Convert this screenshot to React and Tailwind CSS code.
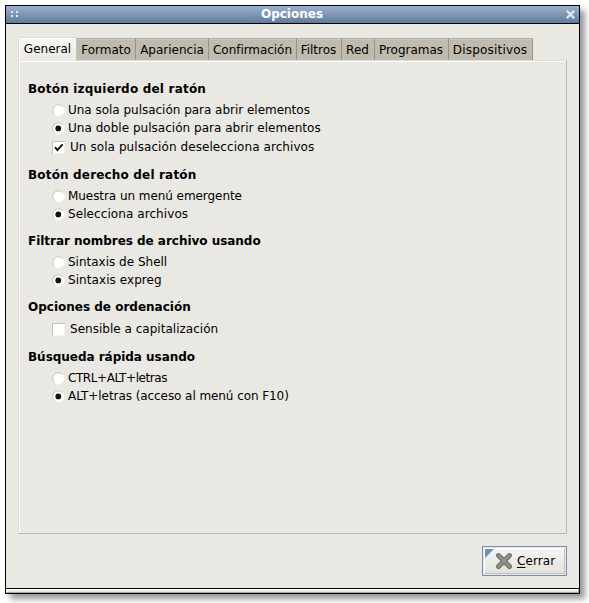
import React from "react";

const tabs = [
  { label: "Formato", width: "w-[59px]" },
  { label: "Apariencia", width: "w-[73px]" },
  { label: "Confirmación", width: "w-[88px] tracking-[-0.05px]" },
  { label: "Filtros", width: "w-[45px] pr-px" },
  { label: "Red", width: "w-[33px] pr-px" },
  { label: "Programas", width: "w-[74px] pr-px" },
  { label: "Dispositivos", width: "w-[84px] pr-px tracking-[0.18px]" },
];

const groups = [
  {
    title: "Botón izquierdo del ratón",
    spacing: "tracking-[0.2px]",
    options: [
      { type: "radio", spacing: "tracking-[-0.02px]", label: "Una sola pulsación para abrir elementos" },
      { type: "radio", on: true, spacing: "tracking-[0.025px]", label: "Una doble pulsación para abrir elementos" },
      { type: "check", on: true, spacing: "tracking-[0.075px]", label: "Un sola pulsación deselecciona archivos" },
    ],
  },
  {
    title: "Botón derecho del ratón",
    spacing: "tracking-[0.17px]",
    options: [
      { type: "radio", spacing: "tracking-[-0.06px]", label: "Muestra un menú emergente" },
      { type: "radio", on: true, spacing: "tracking-[0.08px]", label: "Selecciona archivos" },
    ],
  },
  {
    title: "Filtrar nombres de archivo usando",
    spacing: "tracking-[-0.03px]",
    options: [
      { type: "radio", spacing: "tracking-normal", label: "Sintaxis de Shell" },
      { type: "radio", on: true, spacing: "tracking-[0.07px]", label: "Sintaxis expreg" },
    ],
  },
  {
    title: "Opciones de ordenación",
    spacing: "tracking-normal",
    options: [{ type: "check", spacing: "tracking-[0.02px]", label: "Sensible a capitalización" }],
  },
  {
    title: "Búsqueda rápida usando",
    spacing: "tracking-[-0.03px]",
    options: [
      { type: "radio", spacing: "tracking-[-0.42px]", label: "CTRL+ALT+letras" },
      { type: "radio", on: true, spacing: "tracking-[-0.07px]", label: "ALT+letras (acceso al menú con F10)" },
    ],
  },
];

function Radio({ on }) {
  return (
    <svg className="h-[13px] w-[13px] shrink-0" viewBox="0 0 13 13">
      <circle cx="6.5" cy="6.5" r="5.7" fill="#fff" stroke="#f7f7f3" />
      <path d="M2.4 10.4A5.6 5.6 0 0 1 10.4 2.4" fill="none" stroke="#c4c0b4" />
      {on && <circle cx="6.3" cy="6.4" r="2.9" fill="#111" />}
    </svg>
  );
}

function Check({ on }) {
  return (
    <svg className="h-[13px] w-[13px] shrink-0" viewBox="0 0 13 13">
      <path d="M0 0h13v13H0z" fill="#fff" />
      <path d="M.5 13V.5H13" fill="none" stroke="#c4c0b4" />
      <path d="M1 12.5H12.5V1" fill="none" stroke="#f3f2ee" />
      {on && <path d="M3 6.2L5.4 9L10.6 3.3" fill="none" stroke="#111" strokeWidth="1.9" />}
    </svg>
  );
}

function Option({ type, on, label, spacing }) {
  const check = type === "check";
  return (
    <div className={check ? "flex h-5 items-center gap-[5px]" : "flex h-[18px] items-center gap-[3px]"}>
      {check ? <Check on={on} /> : <Radio on={on} />}
      <span className={spacing}>{label}</span>
    </div>
  );
}

export default function App() {
  return (
    <div className="h-[603px] w-[589px] overflow-hidden bg-white pl-[5px] pt-[5px] font-['DejaVu_Sans',sans-serif] text-[12px] leading-[18px] whitespace-nowrap text-black">
      <div className="flex h-[589px] w-[575px] flex-col border border-black bg-[#e9e8e3] shadow-[5px_5px_6px_rgba(0,0,0,0.4)]">
        <div className="flex h-[18px] shrink-0 items-center justify-between border-b border-black bg-linear-to-b from-[#9bb2d0] to-[#607c9a] pl-[5px] pr-[4px] text-white">
          <svg className="h-[7px] w-[20px]" viewBox="0 0 20 7" shapeRendering="crispEdges">
            <path d="M0 0h2v2H0zM5 0h2v2H5zM0 4h2v2H0zM5 4h2v2H5z" fill="#e6ebf2" />
          </svg>
          <span className="pb-[2px] pr-[2px] font-bold">Opciones</span>
          <div className="flex w-5 justify-end">
            <svg className="h-[9px] w-[9px]" viewBox="0 0 9 9">
              <path d="M.8 .8L8.2 8.2M8.2 .8L.8 8.2" stroke="#e6ebf2" strokeWidth="2.2" />
            </svg>
          </div>
        </div>

        <div className="flex min-h-0 flex-1 flex-col px-3 pt-[13px]">
          <div className="flex h-[23px] shrink-0 items-end">
            <div className="z-10 flex h-6 w-[59px] translate-y-px justify-center border-l border-t border-r border-[#dcdad4] border-r-[#c8c4b9] bg-linear-to-b from-[#f8f8f6] to-[#e9e8e3] pt-[2px] shadow-[inset_1px_1px_0_#fff]">
              General
            </div>
            {tabs.map((t) => (
              <div
                key={t.label}
                className={`${t.width} flex h-[22px] justify-center border-t border-r border-t-[#b5b1a4] border-r-[#969284] bg-[#c0bbae] pt-[2px] shadow-[inset_0_1px_0_#cbc7bc]`}
              >
                {t.label}
              </div>
            ))}
          </div>
          <div className="h-[474px] w-[549px] shrink-0 border border-[#dcdad4] border-r-[#b9b8b3] border-b-[#b9b8b3] pl-[9px] pt-[19px] shadow-[inset_1px_1px_0_#fff]">
            <div className="flex flex-col gap-[9px]">
              {groups.map((g) => (
                <section key={g.title}>
                  <h2 className={`${g.spacing} mb-[3px] h-[18px] font-bold`}>{g.title}</h2>
                  <div className="pl-6">
                    {g.options.map((o) => (
                      <Option key={o.label} {...o} />
                    ))}
                  </div>
                </section>
              ))}
            </div>
          </div>
          <button className="mt-3 flex h-[30px] w-[85px] shrink-0 items-center self-end border border-[#7391b3] p-px">
            <span className="relative flex h-full w-full items-center border border-[#fff] border-r-[#c4c0b4] border-b-[#c4c0b4] bg-linear-to-b from-[#f5f5f2] to-[#e3e2dc] pl-[10px]">
              <svg className="absolute left-0 top-0 h-[9px] w-[9px]" viewBox="0 0 9 9">
                <path d="M0 0H9L0 9Z" fill="#6f90b2" />
              </svg>
              <svg className="h-[18px] w-[18px]" viewBox="0 0 18 18">
                <path d="M3.5 3.5L14.5 14.5M14.5 3.5L3.5 14.5" stroke="#686a66" strokeWidth="4.8" strokeLinecap="round" />
                <path d="M3.5 3.5L14.5 14.5M14.5 3.5L3.5 14.5" stroke="#8f918d" strokeWidth="2.8" strokeLinecap="round" />
              </svg>
              <span className="pl-[4px] tracking-[0.1px]">
                <span className="underline underline-offset-2">C</span>errar
              </span>
            </span>
          </button>
        </div>
        <div className="h-[5px] shrink-0 border-t border-black">
          <div className="h-full border border-[#fff] border-r-[#aaa69b] border-b-[#aaa69b]" />
        </div>
      </div>
    </div>
  );
}
